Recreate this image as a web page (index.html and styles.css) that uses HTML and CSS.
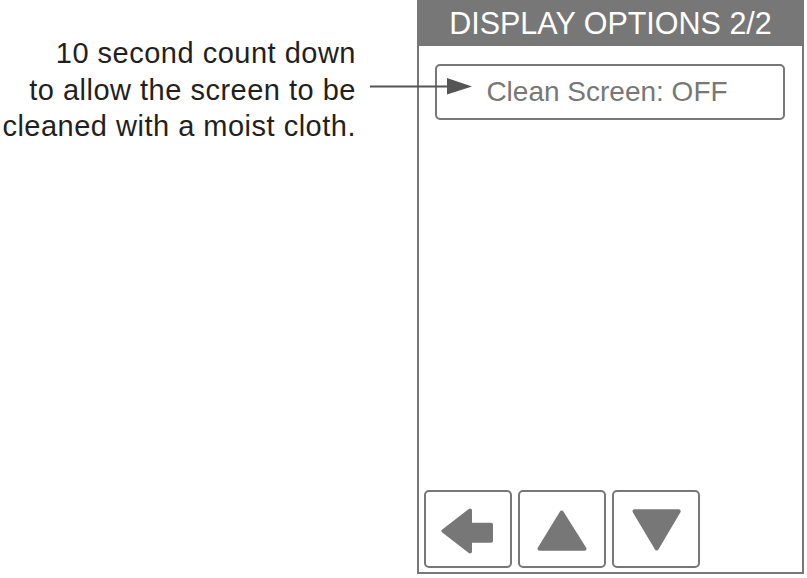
FILE: index.html
```html
<!DOCTYPE html>
<html>
<head>
  <meta charset="utf-8">
  <title>Display Options 2/2</title>
  <meta name="viewport" content="width=device-width, initial-scale=1">
  <link rel="stylesheet" href="styles.css">
</head>
<body>

<div class="page">
  <div class="callout">
    10 second count down<br>
    to allow the screen to be<br>
    cleaned with a moist cloth.
  </div>

  <svg class="pointer" viewBox="0 0 106 20" width="106" height="20">
    <line x1="2" y1="10.5" x2="81" y2="10.5" stroke="#555" stroke-width="2" />
    <polygon points="79,2 104,10.5 79,18.5" fill="#555" />
  </svg>

  <section class="device">
    <div class="device-header">DISPLAY OPTIONS 2/2</div>

    <div class="device-body">
      <div class="option">Clean Screen: OFF</div>
    </div>

    <div class="nav">
      <button class="nav-btn" type="button" aria-label="Back">
        <svg viewBox="2 2 84 74">
          <path d="M19.5 41 L46 20.5 L46 34.7 L67 34.7 L67 50.7 L46 50.7 L46 61.5 Z" fill="#777" stroke="#777" stroke-width="4" stroke-linejoin="round" />
        </svg>
      </button>
      <button class="nav-btn" type="button" aria-label="Up">
        <svg viewBox="2 2 84 74">
          <path d="M43.7 22.5 L66.5 58.7 L21.5 58.7 Z" fill="#777" stroke="#777" stroke-width="4" stroke-linejoin="round" />
        </svg>
      </button>
      <button class="nav-btn" type="button" aria-label="Down">
        <svg viewBox="2 2 84 74">
          <path d="M22.5 21.3 L66.7 21.3 L44.7 58.5 Z" fill="#777" stroke="#777" stroke-width="4" stroke-linejoin="round" />
        </svg>
      </button>
    </div>
  </section>
</div>

</body>
</html>
```

FILE: styles.css
```css
body {
  margin: 0;
  background: #fff;
  font-family: "Liberation Sans", Arial, sans-serif;
}

.page {
  position: relative;
  display: flex;
  align-items: flex-start;
}

.callout {
  width: 356px;
  padding-top: 35px;
  text-align: right;
  font-size: 29px;
  line-height: 36.5px;
  letter-spacing: 0.5px;
  color: #231f20;
  white-space: nowrap;
  margin-right: -1px;
}

.pointer {
  position: absolute;
  left: 368px;
  top: 76px;
}

.device {
  box-sizing: border-box;
  width: 387px;
  height: 574px;
  margin-left: 62px;
  border: 2px solid #777;
  border-top: 0;
  display: flex;
  flex-direction: column;
}

.device-header {
  height: 46px;
  margin: 0 -2px;
  background: #777;
  color: #fff;
  font-size: 30.5px;
  line-height: 46px;
  text-align: center;
}

.device-body {
  flex: 1;
  padding: 18px 17px 0 16px;
}

.option {
  box-sizing: border-box;
  height: 56px;
  border: 2px solid #777;
  border-radius: 5px;
  color: #777;
  font-size: 28px;
  line-height: 52px;
  text-align: center;
  padding-right: 6px;
}

.nav {
  display: flex;
  gap: 6px;
  padding: 0 5px 4px;
}

.nav-btn {
  box-sizing: border-box;
  width: 88px;
  height: 78px;
  padding: 0;
  border: 2px solid #777;
  border-radius: 5px;
  background: #fff;
}

.nav-btn svg {
  display: block;
  width: 100%;
  height: 100%;
}
```
